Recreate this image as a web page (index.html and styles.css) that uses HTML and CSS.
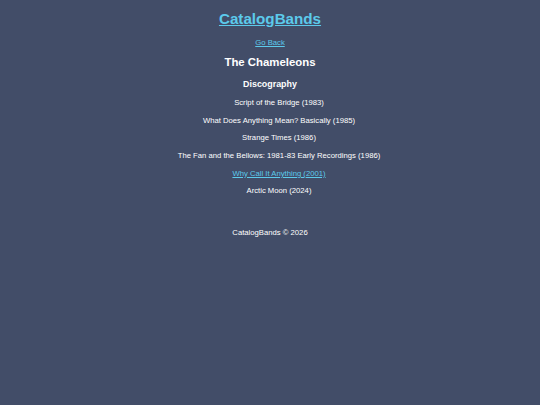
FILE: index.html
```html
<!DOCTYPE html>
<html lang="en">
<head>
<meta charset="utf-8">
<title>The Chameleons - CatalogBands</title>
<link rel="stylesheet" href="styles.css">
</head>
<body>
<header class="site-header">
  <h1 class="site-title"><a href="#">CatalogBands</a></h1>
</header>
<main class="content">
  <a class="back-link" href="#">Go Back</a>
  <h2 class="band-name">The Chameleons</h2>
  <h3 class="section-title">Discography</h3>
  <ul class="albums">
    <li>Script of the Bridge (1983)</li>
    <li>What Does Anything Mean? Basically (1985)</li>
    <li>Strange Times (1986)</li>
    <li>The Fan and the Bellows: 1981-83 Early Recordings (1986)</li>
    <li><a href="#">Why Call It Anything (2001)</a></li>
    <li>Arctic Moon (2024)</li>
  </ul>
</main>
<footer class="site-footer">CatalogBands © 2026</footer>
</body>
</html>
```
FILE: styles.css
```css
html, body {
  margin: 0;
  padding: 0;
}
body {
  background: #424d68;
  color: #ffffff;
  font-family: "Liberation Sans", Arial, sans-serif;
  font-size: 7.7px;
  line-height: normal;
  text-align: center;
  min-height: 405px;
}
a {
  color: #5ccaeb;
  text-decoration: underline;
}
.site-header {
  padding-top: 10.2px;
}
.site-title {
  margin: 0;
  font-size: 15.2px;
  font-weight: bold;
}
.content {
  display: flex;
  flex-direction: column;
  align-items: stretch;
  padding-top: 10.6px;
}
.back-link {
  align-self: center;
}
.band-name {
  margin: 8.9px 0 0;
  font-size: 11.4px;
  font-weight: bold;
}
.section-title {
  margin: 11.4px 0 0;
  font-size: 8.9px;
  font-weight: bold;
}
.albums {
  list-style: none;
  margin: 8.8px 0 0;
  padding: 0 0 0 18px;
  display: flex;
  flex-direction: column;
  align-items: center;
  gap: 8.7px;
}
.site-footer {
  margin-top: 32.5px;
}
```
